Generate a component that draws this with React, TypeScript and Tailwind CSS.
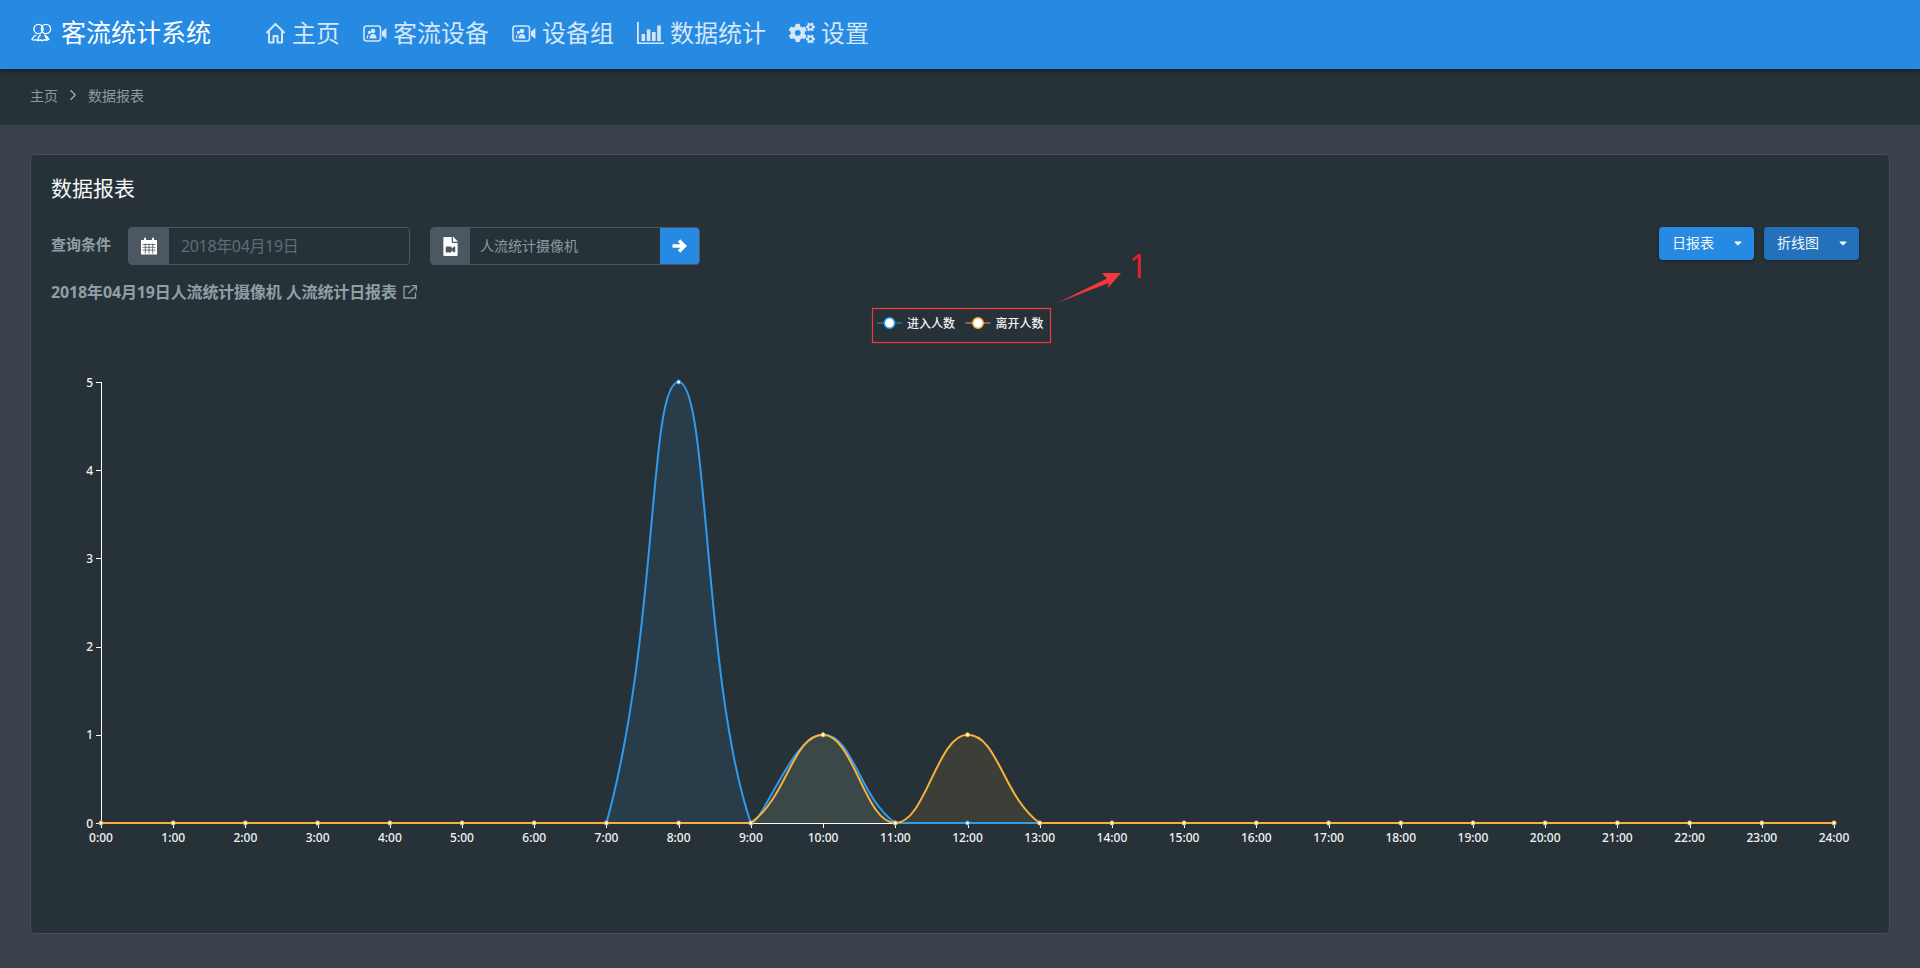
import { ChevronRight } from "lucide-react";
import { FaCaretDown, FaCogs, FaFileVideo } from "react-icons/fa";

const X0 = 101;
const XSTEP = (1834 - 101) / 24;
const Y0 = 823;
const YSTEP = 88.2;

const hours = Array.from({ length: 25 }, (_, i) => i);
const inData = hours.map((h) => (h === 8 ? 5 : h === 10 ? 1 : 0));
const outData = hours.map((h) => (h === 10 || h === 12 ? 1 : 0));

const px = (i: number) => X0 + i * XSTEP;
const py = (v: number) => Y0 - v * YSTEP;

// same idea as echarts' smooth line: tangent from neighbours, clamped to the data box
function smoothPath(data: number[]) {
  const pts = data.map((v, i) => [px(i), py(v)]);
  const yMin = Math.min(...pts.map((p) => p[1]));
  const yMax = Math.max(...pts.map((p) => p[1]));
  const xMin = pts[0][0];
  const xMax = pts[pts.length - 1][0];
  const clamp = (v: number, a: number, b: number) => Math.min(b, Math.max(a, v));
  const cps = pts.map((p, i) => {
    const prev = pts[Math.max(i - 1, 0)];
    const next = pts[Math.min(i + 1, pts.length - 1)];
    const d0 = Math.hypot(p[0] - prev[0], p[1] - prev[1]);
    const d1 = Math.hypot(p[0] - next[0], p[1] - next[1]);
    const sum = d0 + d1 || 1;
    const vx = next[0] - prev[0];
    const vy = next[1] - prev[1];
    const sx = 0.42;
    const sy = 0.5;
    return {
      a: [clamp(p[0] - (vx * d0 * sx) / sum, xMin, xMax), clamp(p[1] - (vy * d0 * sy) / sum, yMin, yMax)],
      b: [clamp(p[0] + (vx * d1 * sx) / sum, xMin, xMax), clamp(p[1] + (vy * d1 * sy) / sum, yMin, yMax)],
    };
  });
  let d = `M${pts[0][0]} ${pts[0][1]}`;
  for (let i = 1; i < pts.length; i++) {
    const c1 = cps[i - 1].b;
    const c2 = cps[i].a;
    d += ` C${c1[0]} ${c1[1]} ${c2[0]} ${c2[1]} ${pts[i][0]} ${pts[i][1]}`;
  }
  return d;
}

const HomeIcon = () => (
  <svg width="21" height="22" viewBox="0 0 21 22" fill="none" stroke="currentColor" strokeWidth="2">
    <path d="M1.5 11 10.5 2l9 9M4 9v11.5h4.5v-6.5h4v6.5H17V9" strokeLinejoin="round" />
  </svg>
);

const CameraIcon = () => (
  <svg width="24" height="17" viewBox="0 0 24 17" fill="none">
    <rect x="1" y="1" width="16.5" height="15" rx="2.5" stroke="currentColor" strokeWidth="1.6" />
    <circle cx="10" cy="6" r="2.3" fill="currentColor" />
    <circle cx="6.4" cy="7.4" r="1.6" fill="currentColor" />
    <path d="M6.5 13.5c0-3 1.3-4.6 3.5-4.6s3.500 1.600 3.500 4.600zM3.600 13.500c0-2.400.8-3.800 2.300-4-.7 1-1 2.400-1 4z" fill="currentColor" />
    <path d="M19 6.400 23.400 3v11L19 10.600z" fill="currentColor" />
  </svg>
);

const BarsIcon = () => (
  <svg width="27" height="24" viewBox="0 0 27 24" fill="currentColor">
    <path d="M0 1h1.800v20.400H27V23H0z" />
    <rect x="4.500" y="13" width="3.600" height="7" />
    <rect x="9.800" y="8.500" width="3.600" height="11.500" />
    <rect x="15" y="11" width="3.600" height="9" />
    <rect x="20.200" y="4.500" width="3.600" height="15.500" />
  </svg>
);

const PeopleIcon = () => (
  <svg width="22" height="20" viewBox="0 0 22 20" fill="none" stroke="currentColor" strokeWidth="1.4">
    <circle cx="7.500" cy="6" r="4.600" />
    <circle cx="15" cy="6" r="4.600" />
    <path d="M1 16.500c.8-2.400 2-3.600 3.800-4.200M1 16.500c1.400.8 2.600.8 3.800.2 1.400 1.100 3 1.100 4.400.1 1.400.9 3 .9 4.200-.1 1.400.8 2.800.7 4.400-.2-.8-2.400-2-3.600-3.800-4.200M9.200 12.300c-1 .8-2 2.500-2.500 4.300M13.800 12.300c.9.9 1.800 2.500 2.200 4.200" strokeLinecap="round" />
  </svg>
);

const CalendarIcon = () => (
  <svg width="18" height="18" viewBox="0 0 18 18" fill="#fff">
    <rect x="4" y="0.500" width="2" height="4" rx="1" />
    <rect x="12" y="0.500" width="2" height="4" rx="1" />
    <path d="M1 3h16v14.500H1z" />
    <path d="M2.500 7.500h13M2.500 10.300h13M2.500 13.100h13M5.300 6.500v10M9 6.500v10M12.700 6.500v10" stroke="#4d5762" strokeWidth="0.8" />
  </svg>
);

const BoldArrow = () => (
  <svg width="15" height="14" viewBox="0 0 15 14" fill="none" stroke="#fff" strokeWidth="3.400">
    <path d="M0.500 7h11M7 1.500 12.500 7 7 12.500" />
  </svg>
);

const ExternalIcon = () => (
  <svg width="14" height="14" viewBox="0 0 14 14" fill="none" stroke="currentColor" strokeWidth="1.300">
    <path d="M7 1.500H1v11.500h11.500V7.500M5.500 8.500 13 1M8.500 .7h4.800v4.800" />
  </svg>
);

const navItems = [
  { label: "主页", icon: <HomeIcon />, gap: "gap-[6px]" },
  { label: "客流设备", icon: <CameraIcon />, gap: "gap-[6px]" },
  { label: "设备组", icon: <CameraIcon />, gap: "gap-[6px]" },
  { label: "数据统计", icon: <BarsIcon />, gap: "gap-[6px]" },
  { label: "设置", icon: <FaCogs size={26} />, gap: "gap-[6px]" },
];

const Legend = ({ x, color, dim, label }: { x: number; color: string; dim: string; label: string }) => (
  <g>
    <line x1={x} x2={x + 25} y1={323} y2={323} stroke={dim} strokeWidth="1.500" />
    <circle cx={x + 12.500} cy={323} r={5.200} fill="#fff" stroke={color} strokeWidth="1.500" />
    <text x={x + 30} y={323} dominantBaseline="central" fontSize="12" fontWeight="500" fill="#f0f0f0">
      {label}
    </text>
  </g>
);

const Chart = () => {
  const inLine = smoothPath(inData);
  const outLine = smoothPath(outData);
  return (
    <svg width="1857" height="628" viewBox="31 305 1857 628" className="block">
      {/* axes */}
      <line x1={101.500} x2={101.500} y1={382} y2={Y0 + 0.500} stroke="#fff" />
      <line x1={101} x2={1834} y1={Y0 + 0.500} y2={Y0 + 0.500} stroke="#fff" />
      {[0, 1, 2, 3, 4, 5].map((v) => (
        <g key={v}>
          <line x1={96} x2={101} y1={Math.round(py(v)) + 0.500} y2={Math.round(py(v)) + 0.500} stroke="#fff" />
          <text x={93} y={py(v)} textAnchor="end" dominantBaseline="central" fontSize="12" fontWeight="500" fill="#f2f2f2">
            {v}
          </text>
        </g>
      ))}
      {hours.map((h) => (
        <g key={h}>
          <line x1={Math.round(px(h)) + 0.500} x2={Math.round(px(h)) + 0.500} y1={Y0} y2={Y0 + 5} stroke="#fff" />
          <text x={px(h)} y={837} textAnchor="middle" dominantBaseline="central" fontSize="12" fontWeight="500" fill="#f2f2f2">
            {h}:00
          </text>
        </g>
      ))}
      {/* series */}
      <path d={`${inLine} L${px(24)} ${Y0} L${px(0)} ${Y0}Z`} fill="#2e9bf0" fillOpacity="0.1" />
      <path d={inLine} fill="none" stroke="#2e9bf0" strokeWidth="2" />
      {inData.map((v, i) => (
        <circle key={i} cx={px(i)} cy={py(v)} r="2" fill="#fff" stroke="#2e9bf0" />
      ))}
      <path d={`${outLine} L${px(24)} ${Y0} L${px(0)} ${Y0}Z`} fill="#f7b23b" fillOpacity="0.1" />
      <path d={outLine} fill="none" stroke="#f7b23b" strokeWidth="2" />
      {outData.map((v, i) => (
        <circle key={i} cx={px(i)} cy={py(v)} r="2" fill="#fff" stroke="#f7b23b" />
      ))}
      {/* legend, boxed by hand in the picture */}
      <Legend x={877} color="#2e9bf0" dim="#2c6c9e" label="进入人数" />
      <Legend x={965.500} color="#f7b23b" dim="#9a7f4a" label="离开人数" />
      <rect x={872.500} y={308.500} width={178} height={34} fill="none" stroke="#f23a3a" strokeWidth="1.200" />
    </svg>
  );
};

const DropButton = ({ label, className }: { label: string; className: string }) => (
  <button className={`flex h-[33px] w-[95px] items-center rounded-[4px] pb-[2px] pl-[13px] text-[14px] text-[#f2f7fc] shadow-[0_1px_3px_rgba(0,0,0,0.35)] ${className}`}>
    <span>{label}</span>
    <FaCaretDown size={12} className="ml-[18px] text-white" />
  </button>
);

export default function App() {
  return (
    <div className="relative h-[968px] overflow-hidden bg-[#3a414b] font-['Noto_Sans','Noto_Sans_CJK_SC',sans-serif]">
      <header className="relative z-10 flex h-[69px] items-center bg-[#2689e2] pb-[3px] pl-[31px] shadow-[0_2px_4px_rgba(0,0,0,0.45)]">
        <div className="flex items-center gap-[8px] text-white">
          <PeopleIcon />
          <span className="text-[25px]">客流统计系统</span>
        </div>
        <nav className="ml-[54px] flex items-center gap-[23px] text-[24px] text-[#d4e7f9]">
          {navItems.map((item) => (
            <a key={item.label} className={`flex items-center ${item.gap}`}>
              {item.icon}
              <span>{item.label}</span>
            </a>
          ))}
        </nav>
      </header>

      <div className="flex h-[56px] items-center bg-[#273238] pb-[4px] pl-[30px] text-[14px] text-[#8a9ba1]">
        <span>主页</span>
        <ChevronRight size={18} strokeWidth={1.5} className="mx-[6px] text-[#a6b4b9]" />
        <span>数据报表</span>
      </div>

      <section className="relative mt-[29px] ml-[30px] mr-[30px] h-[780px] rounded-[4px] border border-[#41525f] bg-[#273238]">
        <h2 className="pl-5 pt-[18px] text-[21px] leading-[30px] text-[#f4f6f7]">数据报表</h2>

        <div className="mt-[24px] flex items-start justify-between pl-5 pr-[30px]">
          <div className="flex items-center">
            <span className="mb-[3px] w-[77px] text-[15px] font-bold text-[#8f9fa6]">查询条件</span>
            <div className="flex h-[38px] w-[282px] rounded-[4px] border border-[#4d5965]">
              <span className="flex w-[40px] items-center justify-center bg-[#4d5762]">
                <CalendarIcon />
              </span>
              <span className="flex items-center pl-[12px] text-[16px] tracking-[-0.35px] text-[#5e6c76]">2018年04月19日</span>
            </div>
            <div className="ml-[20px] flex h-[38px] w-[270px] overflow-hidden rounded-[4px] border border-[#4d5965]">
              <span className="flex w-[39px] items-center justify-center bg-[#4d5762] text-white">
                <FaFileVideo size={19} />
              </span>
              <span className="flex flex-1 items-center pb-[2px] pl-[10px] text-[14px] text-[#8a9ba1]">人流统计摄像机</span>
              <span className="flex w-[39px] items-center justify-center bg-[#2689e2] text-white">
                <BoldArrow />
              </span>
            </div>
          </div>
          <div className="flex gap-[10px]">
            <DropButton label="日报表" className="bg-[#2689e2]" />
            <DropButton label="折线图" className="bg-[#2271ba]" />
          </div>
        </div>

        <div className="mt-[16px] flex h-[22px] items-center gap-[6px] pl-5 text-[#8f9fa6]">
          <span className="text-[16px] font-bold tracking-[-0.14px]">2018年04月19日人流统计摄像机 人流统计日报表</span>
          <ExternalIcon />
        </div>

        <div className="mt-[2px]">
          <Chart />
        </div>

        {/* red note drawn over the chart */}
        <svg width="110" height="68" viewBox="1050 240 110 68" className="absolute left-[1019px] top-[85px]">
          <polygon points="1057,303 1107,278.500 1102,273 1121,273 1108,288 1108.500,283" fill="#f23a3a" />
          <text x={1129} y={278} fontSize="32" fontWeight="400" fill="#e8202a">
            1
          </text>
        </svg>
      </section>
    </div>
  );
}
